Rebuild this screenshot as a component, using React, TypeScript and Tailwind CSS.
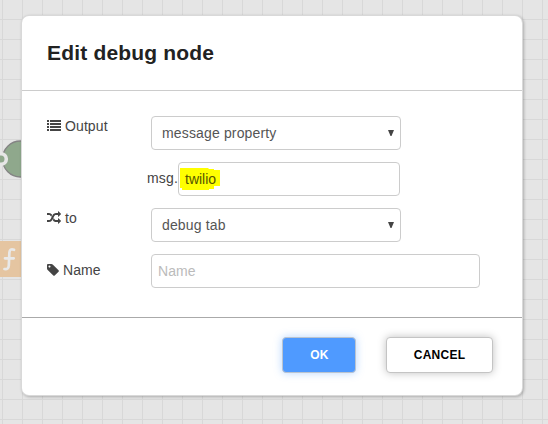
import type { ReactNode } from "react";

function Canvas() {
  return (
    <svg className="absolute inset-0" width="548" height="424" viewBox="0 0 548 424">
      <defs>
        <pattern id="grid" x="2" y="19" width="20" height="20" patternUnits="userSpaceOnUse">
          <path d="M0 0h20v1H1v19H0z" fill="#d8d8d8" />
        </pattern>
      </defs>
      <rect width="548" height="424" fill="#e5e5e5" />
      <rect width="548" height="424" fill="url(#grid)" />
      <circle cx="20.5" cy="159" r="18" fill="#8fa88c" stroke="#848484" strokeWidth="1.3" />
      <circle cx="1" cy="159" r="5.3" fill="#8fa88c" stroke="#e6e6e6" strokeWidth="3.6" />
      <rect x="0" y="241" width="30" height="36" fill="#e5c5a1" />
      <path
        d="M14 249.800q-4.200-1.600-4.600 2.700l-.6 13q-.3 4.300-4.300 3.500M5 258.300h8.700"
        fill="none"
        stroke="#e9e9e9"
        strokeWidth="2.700"
        strokeLinecap="round"
      />
    </svg>
  );
}

function ListIcon() {
  return (
    <svg width="14" height="14" viewBox="0 0 14 14" fill="currentColor" shapeRendering="crispEdges">
      <path d="M0 1h2v2H0zM3 1h11v2H3zM0 4h2v2H0zM3 4h11v2H3zM0 7h2v2H0zM3 7h11v2H3zM0 10h2v2H0zM3 10h11v2H3z" />
    </svg>
  );
}

function ShuffleIcon() {
  return (
    <svg width="14" height="14" viewBox="0 0 1792 1792" fill="currentColor">
      <path d="M666 481q-60 92-137 273-22-45-37-72.500t-40.500-63.500-51-56.500-63-35-81.500-14.500h-224q-14 0-23-9t-9-23v-192q0-14 9-23t23-9h224q250 0 410 225zm1126 799q0 14-9 23l-320 320q-9 9-23 9-13 0-22.500-9.500t-9.500-22.500v-192q-32 0-85 .5t-81 1-73-1-71-5-64-10.500-63-18.500-58-28.500-59-40-55-53.500-56-69.500q59-93 136-273 22 45 37 72.500t40.500 63.500 51 56.500 63 35 81.500 14.500h256v-192q0-14 9-23t23-9q12 0 24 10l319 319q9 9 9 23zm0-896q0 14-9 23l-320 320q-9 9-23 9-13 0-22.500-9.500t-9.500-22.500v-192h-256q-48 0-87 15t-69 45-51 61.500-45 77.500q-32 62-78 171-29 66-49.500 111t-54 105-64 100-74 83-90 68.500-106.500 42-128 16.500h-224q-14 0-23-9t-9-23v-192q0-14 9-23t23-9h224q48 0 87-15t69-45 51-61.500 45-77.500q32-62 78-171 29-66 49.500-111t54-105 64-100 74-83 90-68.500 106.500-42 128-16.500h256v-192q0-14 9-23t23-9q12 0 24 10l319 319q9 9 9 23z" />
    </svg>
  );
}

function TagIcon() {
  return (
    <svg width="12" height="14" viewBox="128 0 1536 1792" fill="currentColor">
      <path d="M576 448q0-53-37.500-90.500t-90.500-37.500-90.500 37.500-37.500 90.500 37.500 90.500 90.500 37.500 90.500-37.500 37.500-90.500zm1067 576q0 53-37 90l-491 492q-39 37-91 37-53 0-90-37l-715-716q-38-37-64.500-101t-26.500-117v-416q0-52 38-90t90-38h416q53 0 117 26.500t102 64.500l715 714q37 39 37 91z" />
    </svg>
  );
}

function Label({ icon, children }: { icon: ReactNode; children: ReactNode }) {
  return (
    <div className="flex h-5 w-[104px] items-center gap-1 tracking-[0.1px] text-[#444]">
      {icon}
      <span>{children}</span>
    </div>
  );
}

function Select({ children }: { children: ReactNode }) {
  return (
    <div className="flex h-[34px] w-[250px] items-center justify-between rounded-[4px] border border-[#ccc] pl-2.5 pr-1.5 tracking-[0.15px] text-[#555]">
      <span>{children}</span>
      <svg width="6" height="6" viewBox="0 0 6 6">
        <path d="M0 0h6L3.500 6h-1z" fill="#444" />
      </svg>
    </div>
  );
}

export default function App() {
  return (
    <div className="relative h-[424px] w-[548px] overflow-hidden pl-[22px] pt-4 font-['Liberation_Sans',Arial,sans-serif] text-sm leading-5">
      <Canvas />
      <div className="relative flex h-[379px] w-[500px] flex-col rounded-[7px] bg-white shadow-[0_0_0_1px_#d9d9d9,1px_1px_3px_1px_rgba(0,0,0,0.25)]">
        <header className="flex h-[75px] items-center border-b border-[#ccc] pl-[25px]">
          <h1 className="text-[21px] font-bold tracking-[0.18px] text-[#222]">Edit debug node</h1>
        </header>
        <main className="flex h-[226px] flex-col gap-3 pl-[25px] pt-[25px]">
          <div className="flex items-start">
            <Label icon={<ListIcon />}>Output</Label>
            <Select>message property</Select>
          </div>
          <div className="flex items-center pl-[100px]">
            <span className="w-[31px] pb-0.5 tracking-[0.15px] text-[#444]">msg.</span>
            <div className="relative flex h-[34px] w-[222px] items-center rounded-[4px] border border-[#ccc] pl-1.5">
              <svg className="absolute left-px top-[5px]" width="40" height="22" viewBox="0 0 40 22">
                <path d="M0 0h28l1 1h5v1h6v16h-6v3h-5v1H2v-2H0z" fill="#ff0" />
              </svg>
              <span className="relative text-[#555500]">twilio</span>
            </div>
          </div>
          <div className="flex items-start">
            <Label icon={<ShuffleIcon />}>to</Label>
            <Select>debug tab</Select>
          </div>
          <div className="flex items-start">
            <div className="pt-1.5">
              <Label icon={<TagIcon />}>Name</Label>
            </div>
            <div className="flex h-[34px] w-[329px] items-center rounded-[4px] border border-[#ccc] pl-1.5 tracking-[0.1px] text-[#bbb]">
              Name
            </div>
          </div>
        </main>
        <footer className="flex grow items-start justify-end gap-[30px] border-t border-[#aaa] pr-[29px] pt-[19px] text-xs font-bold">
          <button className="h-9 w-[74px] rounded-[4px] border border-[#bbc4d0] bg-[#4f9aff] pl-px tracking-[0.2px] text-white shadow-[0_0_8px_rgba(79,154,255,0.4)]">
            OK
          </button>
          <button className="h-9 w-[107px] rounded-[4px] border border-[#c4c4c4] bg-white tracking-[0.25px] text-black shadow-[0_0_8px_rgba(0,0,0,0.25)]">
            CANCEL
          </button>
        </footer>
      </div>
    </div>
  );
}
